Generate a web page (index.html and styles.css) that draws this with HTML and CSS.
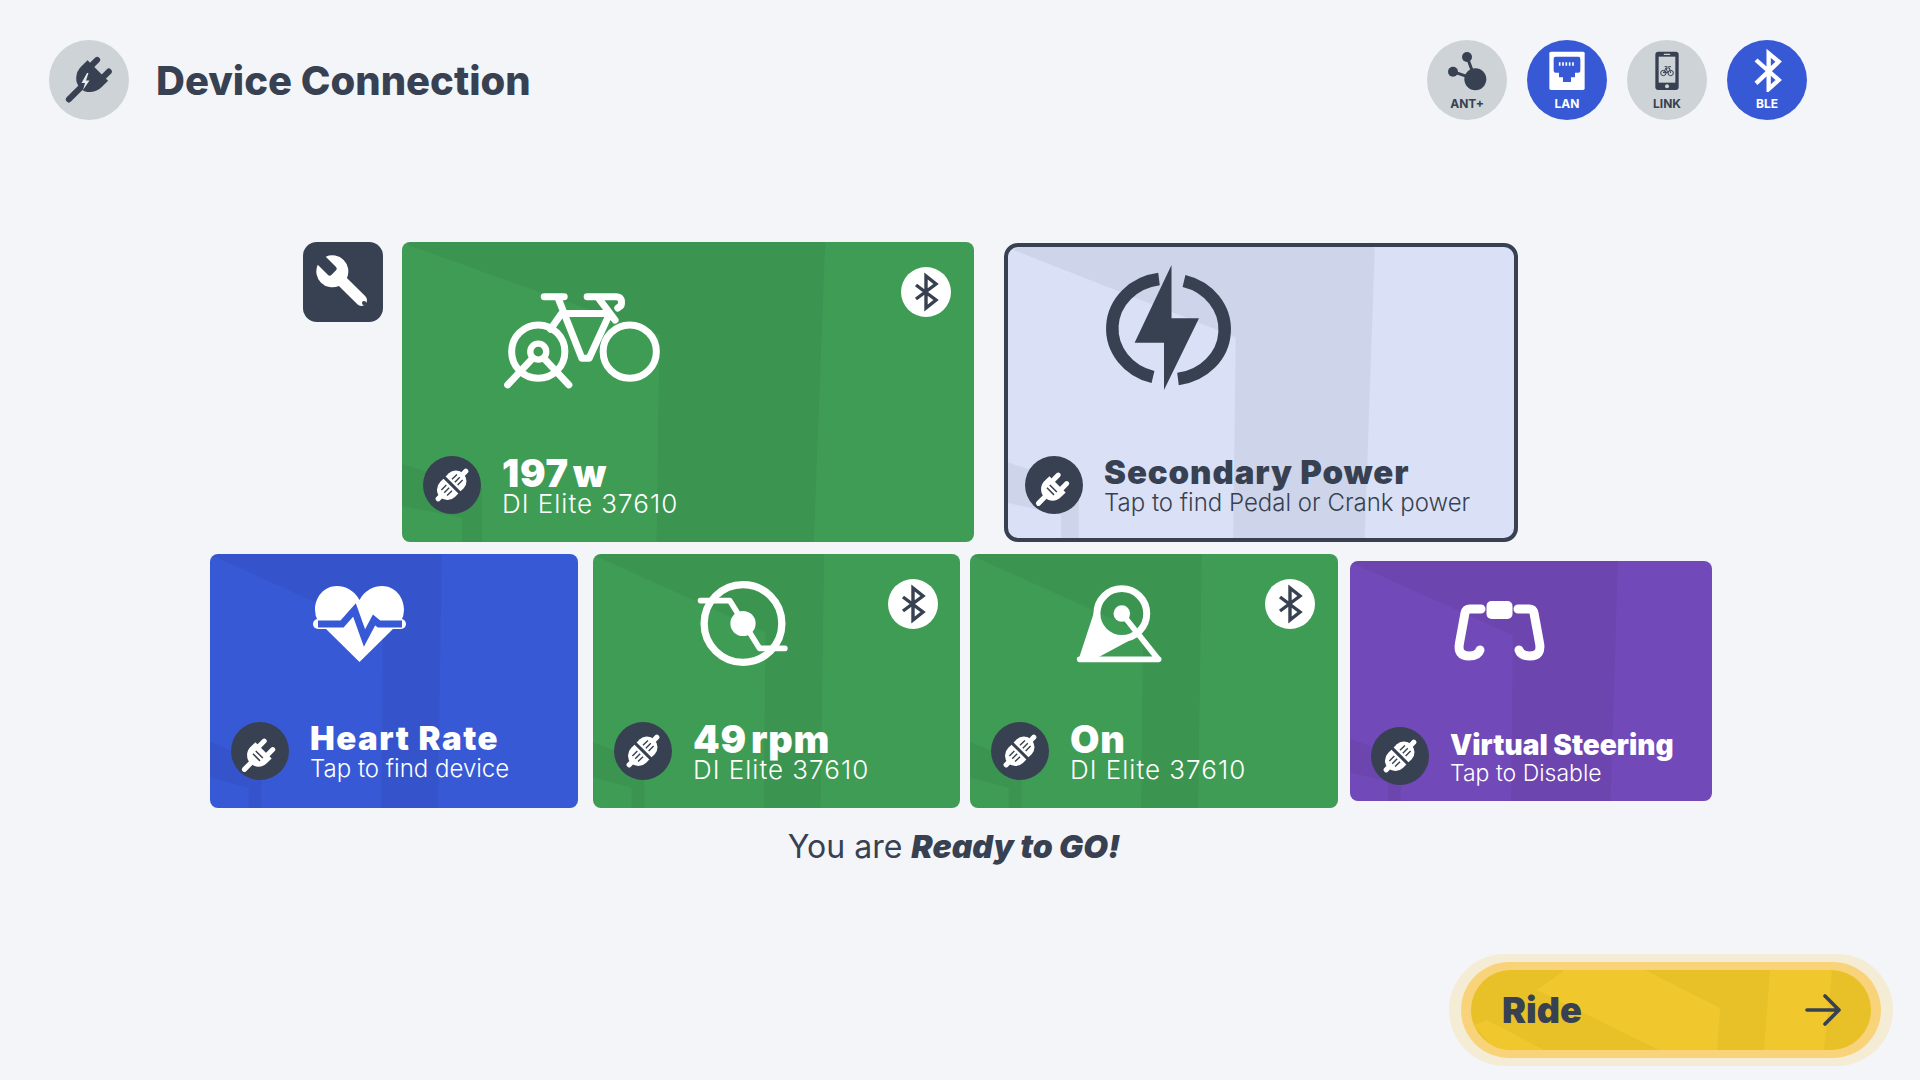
FILE: index.html
```html
<!DOCTYPE html>
<html lang="en">
<head>
  <meta charset="UTF-8">
  <title>Device Connection</title>
  <link rel="stylesheet" href="styles.css">
</head>
<body>
  <svg class="sprites" width="0" height="0">
    <symbol id="plug-joined" viewBox="0 0 58 58">
      <g transform="rotate(45 29 29)">
        <rect x="26.5" y="7" width="5" height="9" rx="2" fill="#fff"/>
        <rect x="26.5" y="43" width="5" height="8" rx="2" fill="#fff"/>
        <path d="M18.500 27.500V23a10.500 10 0 0 1 21 0v4.500z" fill="#fff"/>
        <path d="M18.500 30.500V35a10.500 11 0 0 0 21 0v-4.500z" fill="#fff"/>
        <path d="M25 18v7M29 18v7M33 18v7M25 33v7M29 33v7M33 33v7" stroke="#374151" stroke-width="1.4"/>
      </g>
    </symbol>
    <symbol id="plug-open" viewBox="0 0 58 58">
      <g transform="rotate(45 29 29)">
        <path d="M25 19v9M37 19v9M31 42v11" stroke="#fff" stroke-width="5" stroke-linecap="round"/>
        <path d="M19.500 26h23v7a11.500 11.500 0 0 1-23 0z" fill="#fff"/>
        <path d="M26 32h10M26 36h10" stroke="#374151" stroke-width="1.5"/>
      </g>
    </symbol>
    <symbol id="bt" viewBox="0 0 50 50">
      <path d="M15 18l20 15-10 8V9l10 8-20 15" fill="none" stroke="#374151" stroke-width="3.4"/>
    </symbol>
  </svg>

  <header class="top">
    <div class="top-title">
      <div class="top-plug">
        <svg width="80" height="80" viewBox="0 0 80 80">
          <g transform="rotate(45 40 40)">
            <path d="M31.500 20v12M48 20v12M39.500 50v18" stroke="#374151" stroke-width="6" stroke-linecap="round"/>
            <path d="M25 27h29v9a14.500 16 0 0 1-29 0z" fill="#374151"/>
          </g>
          <polygon points="38,33 32.500,43 36,43 34,50 40.500,40.500 37,40.500 39.500,33" fill="#e6eaed"/>
        </svg>
      </div>
      <h1>Device Connection</h1>
    </div>
    <div class="links">
      <div class="link">
        <svg width="60" height="44" viewBox="110 84 180 132">
          <path d="M200 110l25 68M158 155l67 23" stroke="#374151" stroke-width="9"/>
          <circle cx="225" cy="178" r="33" fill="#374151"/>
          <circle cx="200" cy="111" r="15" fill="#374151"/>
          <circle cx="158" cy="155" r="15" fill="#374151"/>
        </svg>
        <span>ANT+</span>
      </div>
      <div class="link on">
        <svg width="60" height="44" viewBox="410 84 180 132">
          <rect x="447" y="95" width="106" height="115" rx="5" fill="#fff"/>
          <path d="M460 116q0-6 6-6h68q6 0 6 6v36q0 6-6 6h-10v14h-12v14h-24v-14h-12v-14h-10q-6 0-6-6z" fill="#3859d6"/>
          <path d="M478 127v10M488 127v10M498 127v10M508 127v10M518 127v10" stroke="#fff" stroke-width="5"/>
        </svg>
        <span>LAN</span>
      </div>
      <div class="link">
        <svg width="60" height="44" viewBox="710 84 180 132">
          <rect x="765" y="95" width="70" height="115" rx="9" fill="#374151"/>
          <rect x="775" y="110" width="50" height="78" fill="#cdd3d6"/>
          <rect x="790" y="101" width="20" height="4" rx="2" fill="#cdd3d6"/>
          <circle cx="800" cy="199" r="6" fill="#cdd3d6"/>
          <g fill="none" stroke="#374151" stroke-width="3">
            <circle cx="789" cy="159" r="8"/>
            <circle cx="811" cy="159" r="8"/>
            <path d="M789 159l8-15h10l4 15M797 144l5 14h-13M793 140h8M804 140h8"/>
          </g>
        </svg>
        <span>LINK</span>
      </div>
      <div class="link on">
        <svg width="60" height="44" viewBox="1010 84 180 132">
          <path d="M1067 120l68 60-30 27V100l30 25-68 65" fill="none" stroke="#fff" stroke-width="13"/>
        </svg>
        <span>BLE</span>
      </div>
    </div>
  </header>

  <main class="board">
    <div class="row row-one">
      <button class="tools">
        <svg width="64" height="64" viewBox="0 0 24 24">
          <g transform="translate(24 0) scale(-1 1)">
            <path d="M14.7 6.3a1 1 0 0 0 0 1.4l1.6 1.6a1 1 0 0 0 1.4 0l3.77-3.77a6 6 0 0 1-7.94 7.94l-6.91 6.91a2.12 2.12 0 0 1-3-3l6.91-6.91a6 6 0 0 1 7.94-7.94l-3.76 3.76z" fill="#fff"/>
            <circle cx="4.1" cy="19.9" r="0.8" fill="#374151"/>
          </g>
        </svg>
      </button>

      <section class="card green card-power">
        <span class="bt"><svg width="50" height="50"><use href="#bt"/></svg></span>
        <svg class="icon icon-bike" width="163" height="100" viewBox="60 60 490 300" fill="none" stroke="#fff" stroke-width="21" stroke-linecap="round" stroke-linejoin="round">
          <circle cx="175" cy="245" r="80"/>
          <circle cx="175" cy="245" r="24" stroke-width="19"/>
          <path d="M155 268l-72 77M195 268l72 77"/>
          <circle cx="450" cy="245" r="80"/>
          <path d="M193 80h60M234 82l72 183h22l62-135H248M212 178l32-46M322 80h88q20 2 14 26l-10 8M356 84l50 66"/>
        </svg>
        <div class="info">
          <span class="plug"><svg width="58" height="58"><use href="#plug-joined"/></svg></span>
          <div class="text">
            <div class="name name-value">197 w</div>
            <div class="sub sub-device">DI Elite 37610</div>
          </div>
        </div>
      </section>

      <section class="card light card-second">
        <svg class="icon icon-bolt" width="135" height="135" viewBox="0 0 135 135">
          <path d="M59 19A54 50 0 0 0 53 117M84 21A54 50 0 0 1 78 119" fill="none" stroke="#374151" stroke-width="12.500"/>
          <polygon points="71.5,5 34.6,82.7 64,82.7 64,130 99,58.3 71.5,58.3" fill="#374151"/>
        </svg>
        <div class="info">
          <span class="plug"><svg width="58" height="58"><use href="#plug-open"/></svg></span>
          <div class="text">
            <div class="name">Secondary Power</div>
            <div class="sub">Tap to find Pedal or Crank power</div>
          </div>
        </div>
      </section>
    </div>

    <div class="row row-two">
      <section class="card blue card-heart">
        <svg class="icon icon-heart" width="100" height="84" viewBox="0 0 100 84">
          <path d="M49.500 18C44 8 35 4 27 4 14 4 5 15 5 28q0 6 3 11h83q3-5 3-11C94 15 85 4 72 4c-8 0-17 4-22.500 14z" fill="#fff"/>
          <path d="M13 44l36.500 36L86 44z" fill="#fff"/>
          <rect x="3" y="37" width="93" height="10" rx="5" fill="#fff"/>
          <path d="M8 42h24l12.500-14 10 28 9.500-18 5 4h23" fill="none" stroke="#3859d6" stroke-width="7"/>
        </svg>
        <div class="info">
          <span class="plug"><svg width="58" height="58"><use href="#plug-open"/></svg></span>
          <div class="text">
            <div class="name">Heart Rate</div>
            <div class="sub">Tap to find device</div>
          </div>
        </div>
      </section>

      <section class="card green card-cadence">
        <span class="bt"><svg width="50" height="50"><use href="#bt"/></svg></span>
        <svg class="icon icon-crank" width="100" height="93" viewBox="40 20 300 280" fill="none" stroke="#fff" stroke-linecap="round" stroke-linejoin="round">
          <circle cx="190" cy="160" r="117" stroke-width="22"/>
          <circle cx="190" cy="160" r="38" fill="#fff" stroke="none"/>
          <path d="M62 91h88l90 144h76" stroke-width="17"/>
        </svg>
        <div class="info">
          <span class="plug"><svg width="58" height="58"><use href="#plug-joined"/></svg></span>
          <div class="text">
            <div class="name name-value">49 rpm</div>
            <div class="sub sub-device">DI Elite 37610</div>
          </div>
        </div>
      </section>

      <section class="card green card-trainer">
        <span class="bt"><svg width="50" height="50"><use href="#bt"/></svg></span>
        <svg class="icon icon-trainer" width="93" height="87" viewBox="1180 30 280 260" fill="none" stroke="#fff" stroke-linecap="round">
          <path d="M1252 100L1197 268 1255 262 1378 196A82 82 0 0 1 1252 100z" fill="#fff" stroke="none"/>
          <circle cx="1327" cy="130" r="75" stroke-width="21"/>
          <circle cx="1327" cy="130" r="25" fill="#fff" stroke="none"/>
          <path d="M1327 130l110 138M1200 268h238" stroke-width="17"/>
        </svg>
        <div class="info">
          <span class="plug"><svg width="58" height="58"><use href="#plug-joined"/></svg></span>
          <div class="text">
            <div class="name name-value">On</div>
            <div class="sub sub-device">DI Elite 37610</div>
          </div>
        </div>
      </section>

      <section class="card purple card-steer">
        <svg class="icon icon-steer" width="100" height="72" viewBox="0 0 100 72" fill="none" stroke="#fff" stroke-width="9" stroke-linecap="round" stroke-linejoin="round">
          <rect x="36.500" y="6" width="26" height="18" rx="5" fill="#fff" stroke="none"/>
          <path d="M31 14H20q-4 0-5 4L9.500 48Q7 61 19 61q9 0 11-6"/>
          <path d="M68 14h11q4 0 5 4l5.500 30Q92 61 80 61q-9 0-11-6"/>
        </svg>
        <div class="info">
          <span class="plug"><svg width="58" height="58"><use href="#plug-joined"/></svg></span>
          <div class="text">
            <div class="name name-small">Virtual Steering</div>
            <div class="sub sub-small">Tap to Disable</div>
          </div>
        </div>
      </section>
    </div>

    <p class="ready">You are <b>Ready to GO!</b></p>
  </main>

  <footer class="bottom">
    <div class="ride-halo">
      <div class="ride-ring">
        <button class="ride">
          <svg class="ride-bg" width="400" height="80" viewBox="0 0 400 80">
            <polygon points="66,20 94,0 174,0 249,38 246,80 188,80" fill="#f0c82e"/>
            <polygon points="299,0 361,0 353,80 293,80" fill="#f0c82e"/>
            <polygon points="3,55 16,50 73,80 24,80" fill="#f0c82e"/>
          </svg>
          <span class="ride-label">Ride</span>
          <svg class="ride-arrow" width="36" height="32" viewBox="0 0 36 32" fill="none" stroke="#374151" stroke-width="3.600" stroke-linecap="round" stroke-linejoin="round">
            <path d="M2 16h32M20 2l14 14-14 14"/>
          </svg>
        </button>
      </div>
    </div>
  </footer>
</body>
</html>
```

FILE: styles.css
```css
* {
  box-sizing: border-box;
}
body {
  margin: 0;
  height: 1080px;
  overflow: hidden;
  background-color: #f3f5f9;
  color: #374151;
  font-family: Inter, "Liberation Sans", sans-serif;
}
button {
  border: 0;
  padding: 0;
  font-family: inherit;
}
svg {
  display: block;
}
.sprites {
  position: absolute;
}

/* header */
.top {
  display: flex;
  justify-content: space-between;
  padding: 40px 113px 0 49px;
  height: 120px;
}
.top-title {
  display: flex;
  align-items: center;
}
.top-plug {
  width: 80px;
  height: 80px;
  border-radius: 50%;
  background-color: #cdd3d6;
}
.top-title h1 {
  margin: 0 0 0 27px;
  font-size: 40px;
  font-weight: 800;
}
.links {
  display: flex;
  gap: 20px;
}
.link {
  width: 80px;
  height: 80px;
  padding-top: 8px;
  border-radius: 50%;
  background-color: #cdd3d6;
  display: flex;
  flex-direction: column;
  align-items: center;
}
.link span {
  margin-top: 5px;
  font-size: 12px;
  font-weight: 700;
  line-height: 14px;
}
.link.on {
  background-color: #3859d6;
  color: #fff;
}

/* cards */
.board {
  padding-top: 122px;
}
.row {
  display: flex;
}
.row-one {
  height: 300px;
  padding-left: 303px;
}
.row-two {
  align-items: center;
  height: 254px;
  margin-top: 12px;
  padding-left: 210px;
}
.tools {
  width: 80px;
  height: 80px;
  margin-right: 19px;
  border-radius: 14px;
  background-color: #374151;
  display: flex;
  align-items: center;
  justify-content: center;
}
.card {
  position: relative;
  display: flex;
  flex-direction: column;
  justify-content: space-between;
  padding: 0 0 28px 21px;
  border-radius: 8px;
  color: #fff;
}
.card::before,
.card::after {
  content: "";
  position: absolute;
  inset: 0;
  background-color: rgba(0, 0, 0, 0.05);
}
.card::before {
  border-radius: inherit;
  clip-path: polygon(1% 0, 74% 0, 72% 100%, 44.500% 100%, 45% 31%, 1% 1%);
}
.card::after {
  clip-path: polygon(0 74%, 14% 82%, 14% 100%, 10.500% 100%, 10.500% 92%, 0 88%);
}
.card-second::before {
  clip-path: polygon(1% 0, 72.500% 0, 70.500% 100%, 44.500% 100%, 45% 31%, 1% 1%);
}
.card-heart::before,
.card-cadence::before,
.card-trainer::before {
  clip-path: polygon(1% 0, 63% 0, 62% 100%, 46.500% 100%, 47% 31%, 1% 1%);
}
.card > * {
  position: relative;
  z-index: 1;
}
.green {
  background-color: #3f9c55;
}
.blue {
  background-color: #3859d6;
}
.purple {
  background-color: #7249b8;
}
.light {
  background-color: #dae1f7;
  color: #374151;
}
.card-power {
  width: 572px;
  height: 300px;
  margin-right: 30px;
}
.card-second {
  width: 514px;
  height: 299px;
  margin-top: 1px;
  padding: 0 0 24px 17px;
  border: 4px solid #374151;
  border-radius: 14px;
}
.card-heart {
  width: 368px;
  height: 254px;
  margin-right: 15px;
}
.card-cadence {
  width: 367px;
  height: 254px;
  margin-right: 10px;
}
.card-trainer {
  width: 368px;
  height: 254px;
  margin-right: 12px;
}
.card-steer {
  width: 362px;
  height: 240px;
  padding: 0 0 16px 21px;
}
.icon-bike {
  margin: 48px 0 0 77px;
}
.icon-bolt {
  margin: 13px 0 0 75px;
}
.icon-heart {
  margin: 28px 0 0 79px;
}
.icon-crank {
  margin: 23px 0 0 79px;
}
.icon-trainer {
  margin: 26px 0 0 82px;
}
.icon-steer {
  margin: 34px 0 0 79px;
}
.bt {
  position: absolute;
  top: 25px;
  right: 23px;
  width: 50px;
  height: 50px;
  border-radius: 50%;
  background-color: #fff;
}
.card-cadence .bt {
  right: 22px;
}
.info {
  display: flex;
  align-items: center;
  height: 58px;
}
.plug {
  flex: none;
  width: 58px;
  height: 58px;
  margin-right: 21px;
  border-radius: 50%;
  background-color: #374151;
}
.name {
  font-size: 33px;
  font-weight: 900;
  letter-spacing: 0.9px;
  line-height: 36px;
}
.card-heart .name {
  letter-spacing: 1.5px;
}
.name-value {
  margin-top: 2px;
  font-size: 38px;
  letter-spacing: 0.7px;
  line-height: 36px;
  word-spacing: -4px;
}
.name-small {
  margin-top: 4px;
  font-size: 28px;
  letter-spacing: 0;
  line-height: 30px;
}
.sub {
  font-size: 24px;
  font-weight: 300;
  line-height: 26px;
}
.sub-device {
  font-size: 26px;
  letter-spacing: 1px;
}
.sub-small {
  font-size: 23px;
}
.ready {
  margin: 19px 0 0;
  padding-right: 12px;
  font-size: 32px;
  line-height: 40px;
  text-align: center;
}
.ready b {
  font-weight: 900;
  font-style: italic;
}

/* ride button */
.bottom {
  display: flex;
  justify-content: flex-end;
  margin-top: 87px;
  padding-right: 27px;
}
.ride-halo {
  padding: 8px 12px;
  border-radius: 56px;
  background-color: #f4ecd4;
}
.ride-ring {
  padding: 8px 10px;
  border-radius: 48px;
  background-color: #f9d37a;
}
.ride {
  position: relative;
  display: flex;
  align-items: center;
  justify-content: space-between;
  width: 400px;
  height: 80px;
  padding: 0 30px 0 31px;
  border-radius: 40px;
  overflow: hidden;
  background-color: #e8c027;
  color: #374151;
}
.ride-bg {
  position: absolute;
  top: 0;
  left: 0;
}
.ride-label {
  position: relative;
  font-size: 36px;
  font-weight: 900;
}
.ride-arrow {
  position: relative;
}
```
